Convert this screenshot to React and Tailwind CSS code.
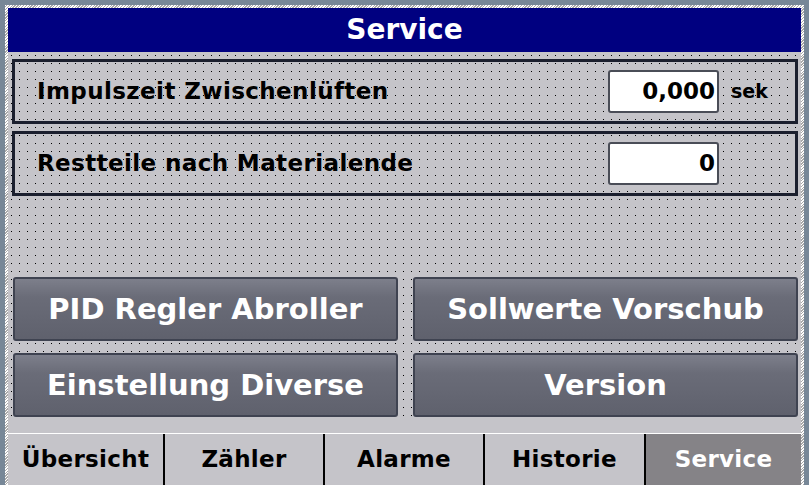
import React from "react";

const dots =
  "bg-[#c5c4c9] bg-[conic-gradient(at_1px_1px,transparent_75%,#000_0)] bg-[length:8px_8px] bg-[position:3px_3px]";

function Field({ label, value, unit }) {
  return (
    <div className="h-[65px] border-[3px] border-[#1b1f2e] flex items-center">
      <div className="ml-[22px] text-[23px] tracking-[0.4px] font-bold text-black flex-1 leading-none">{label}</div>
      <div className="w-[111px] h-[43px] bg-white border-2 border-[#4a4d57] rounded-[3px] flex items-center justify-end pr-[2px] text-[23px] font-bold text-black leading-none">
        {value}
      </div>
      <div className="w-[76px] pl-[12px] text-[19px] font-bold text-black leading-none">{unit}</div>
    </div>
  );
}

function Btn({ children }) {
  return (
    <div className="h-[64px] rounded-[3px] border-2 border-[#3f4351] bg-[linear-gradient(to_bottom,#7d7f8b_0%,#6a6c78_30%,#5f616d_100%)] flex items-center justify-center text-white text-[29px] font-bold leading-none">
      {children}
    </div>
  );
}

function Tab({ children, active, w }) {
  return (
    <div
      className={
        "h-full flex items-center justify-center text-[23px] tracking-[0.3px] font-bold leading-none " +
        (active ? "bg-[#858387] text-white" : "bg-[#c5c4c9] text-black")
      }
      style={{ width: w }}
    >
      {children}
    </div>
  );
}

export default function App() {
  return (
    <div
      className="w-[809px] h-[485px] overflow-hidden bg-[#778797] pt-[5px] px-[5px]"
      style={{ fontFamily: '"DejaVu Sans", "Noto Sans", sans-serif' }}
    >
      <div className="h-[480px] pt-[3px] px-[3px] bg-[repeating-linear-gradient(135deg,#ffffff_0px,#ffffff_1px,#a9a9a9_1px,#a9a9a9_2px)]">
        <div className="h-[477px] flex flex-col bg-[#c5c4c9]">
          <div className="h-[44px] bg-[#000080] flex items-center justify-center text-white text-[28px] font-bold leading-none">
            Service
          </div>
          <div className={"flex-1 flex flex-col pl-[4px] pr-[3px] " + dots}>
            <div className="mt-[7px] flex flex-col gap-[7px]">
              <Field label="Impulszeit Zwischenlüften" value="0,000" unit="sek" />
              <Field label="Restteile nach Materialende" value="0" unit="" />
            </div>
            <div className="mt-[81px] pl-[1px] grid grid-cols-2 gap-x-[15px] gap-y-[12px]">
              <Btn>PID Regler Abroller</Btn>
              <Btn>Sollwerte Vorschub</Btn>
              <Btn>Einstellung Diverse</Btn>
              <Btn>Version</Btn>
            </div>
          </div>
          <div className="h-[1px] mt-[13px] bg-white" />
          <div className="h-[51px] flex">
            <Tab w={155}>Übersicht</Tab>
            <div className="w-[2px] bg-black" />
            <Tab w={158}>Zähler</Tab>
            <div className="w-[2px] bg-black" />
            <Tab w={158}>Alarme</Tab>
            <div className="w-[2px] bg-black" />
            <Tab w={159}>Historie</Tab>
            <div className="w-[2px] bg-black" />
            <Tab w={155} active>Service</Tab>
          </div>
        </div>
      </div>
    </div>
  );
}
